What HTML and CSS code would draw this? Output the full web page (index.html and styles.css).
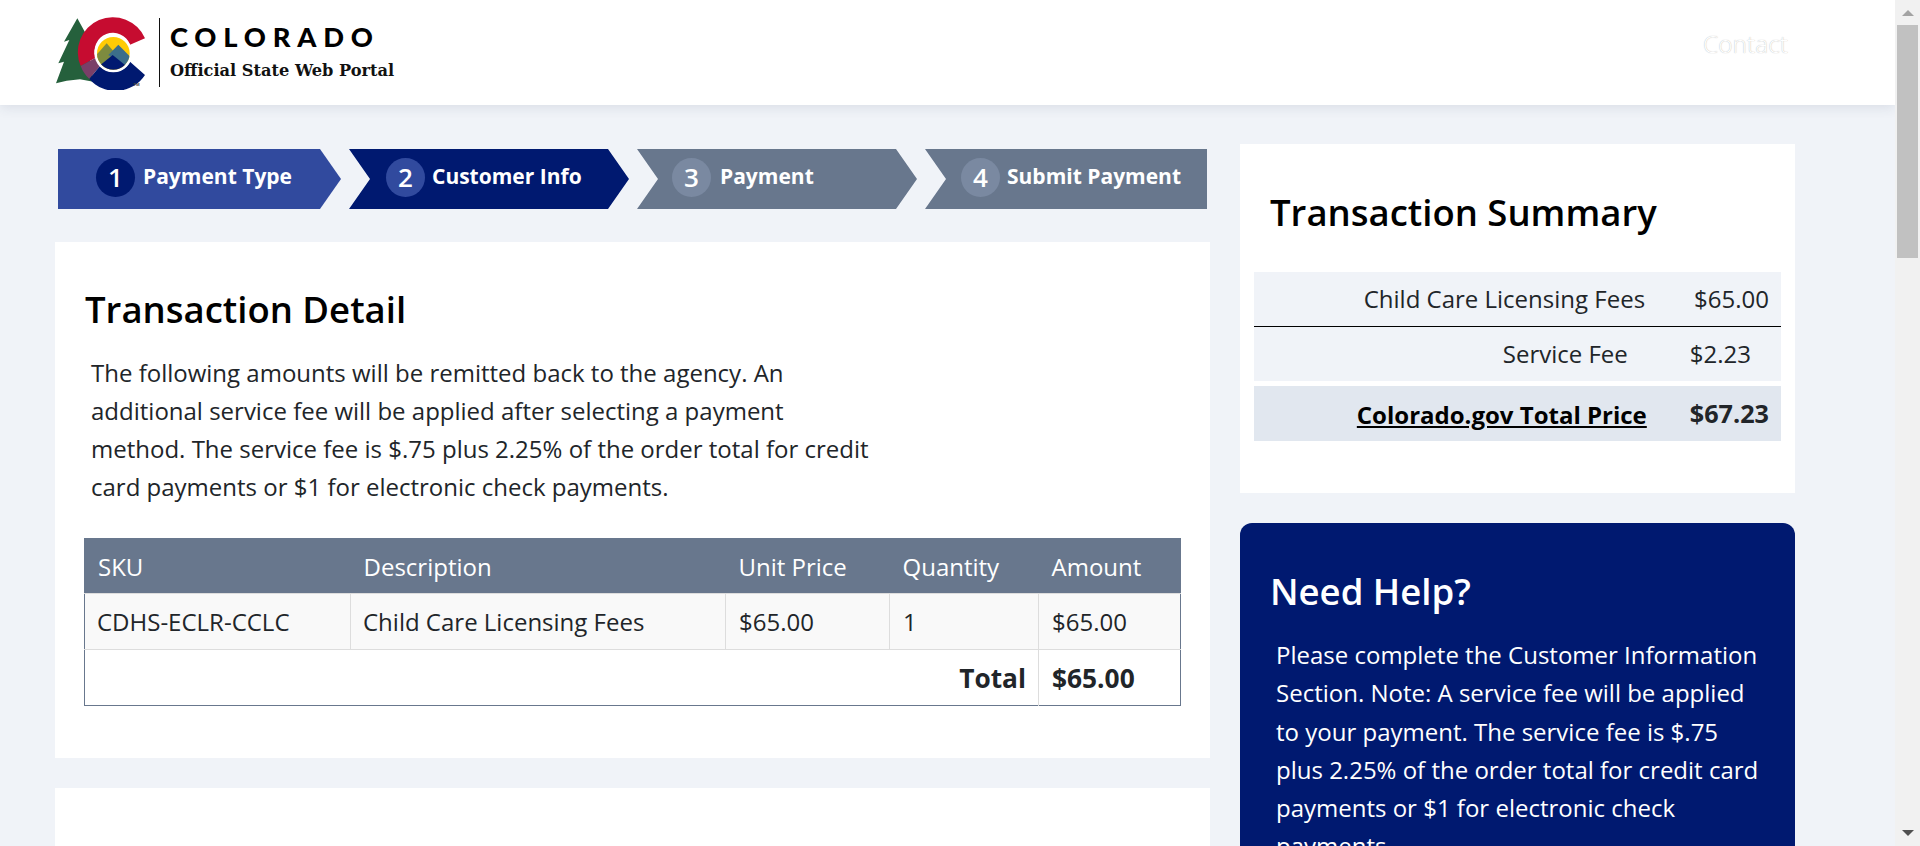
FILE: index.html
```html
<!DOCTYPE html>
<html>

<head>
    <meta charset="utf-8">
    <title>Colorado Official State Web Portal</title>
    <link rel="stylesheet" href="styles.css">
</head>

<body>
    <div class="viewport">
        <div class="page">
            <header class="site-header">
                <div class="logo">
                    <svg class="logo-mark" viewBox="0 0 360 240" width="120" height="80">
                        <polygon fill="#25603c" points="82,25 108,72 130,215 90,208 50,212 18,220 42,155 25,160 58,90 42,95" />
                        <path fill="#c60c30" d="M285 85A105 105 0 1 0 92 168L137 143A55 55 0 0 1 240 104Z" />
                        <path fill="#7a3f68" d="M92 168L137 143A55 55 0 0 0 150 168L118 207A105 105 0 0 1 92 168Z" />
                        <path fill="#001970" d="M118 207L150 168A55 55 0 0 0 240 155L285 195A105 105 0 0 1 118 207Z" />
                        <circle cx="190" cy="130" r="57" fill="#fff" />
                        <clipPath id="scene">
                            <circle cx="190" cy="130" r="49" />
                        </clipPath>
                        <g clip-path="url(#scene)">
                            <rect x="130" y="70" width="120" height="120" fill="#ffcb05" />
                            <polygon fill="#7d8b3f" points="130,145 170,100 200,135 170,180" />
                            <polygon fill="#3c6e8a" points="175,135 205,104 250,150 240,175" />
                            <polygon fill="#001970" points="130,182 188,135 250,185 250,190 130,190" />
                        </g>
                        <text class="logo-tm" x="250" y="227">TM</text>
                    </svg>
                    <div class="logo-text">
                        <div class="logo-state">COLORADO</div>
                        <div class="logo-sub">Official State Web Portal</div>
                    </div>
                </div>
                <a class="contact-link">Contact</a>
            </header>

            <main class="layout">
                <section class="col-main">
                    <div class="steps">
                        <div class="step step-1"><span class="step-num">1</span><span class="step-label">Payment Type</span></div>
                        <div class="step step-2"><span class="step-num">2</span><span class="step-label">Customer Info</span></div>
                        <div class="step step-3"><span class="step-num">3</span><span class="step-label">Payment</span></div>
                        <div class="step step-4"><span class="step-num">4</span><span class="step-label">Submit Payment</span></div>
                    </div>

                    <div class="card detail-card">
                        <h2>Transaction Detail</h2>
                        <p class="detail-note">The following amounts will be remitted back to the agency. An additional service fee will be applied after selecting a payment method. The service fee is $.75 plus 2.25% of the order total for credit card payments or $1 for electronic check payments.</p>
                        <table class="detail-table">
                            <colgroup>
                                <col class="col-sku">
                                <col class="col-desc">
                                <col class="col-price">
                                <col class="col-qty">
                                <col class="col-amount">
                            </colgroup>
                            <thead>
                                <tr>
                                    <th>SKU</th>
                                    <th>Description</th>
                                    <th>Unit Price</th>
                                    <th>Quantity</th>
                                    <th>Amount</th>
                                </tr>
                            </thead>
                            <tbody>
                                <tr class="item-row">
                                    <td>CDHS-ECLR-CCLC</td>
                                    <td>Child Care Licensing Fees</td>
                                    <td>$65.00</td>
                                    <td>1</td>
                                    <td>$65.00</td>
                                </tr>
                                <tr class="total-row">
                                    <td colspan="4">Total</td>
                                    <td>$65.00</td>
                                </tr>
                            </tbody>
                        </table>
                    </div>

                    <div class="card next-card">
                        <h2>Payer</h2>
                    </div>
                </section>

                <aside class="col-side">
                    <div class="card summary-card">
                        <h2>Transaction Summary</h2>
                        <div class="sum-row sum-fees">
                            <span>Child Care Licensing Fees</span>
                            <span>$65.00</span>
                        </div>
                        <div class="sum-row sum-service">
                            <span>Service Fee</span>
                            <span>$2.23</span>
                        </div>
                        <div class="sum-row sum-total">
                            <span class="sum-total-label">Colorado.gov Total Price</span>
                            <span class="sum-total-value">$67.23</span>
                        </div>
                    </div>

                    <div class="help-card">
                        <h2>Need Help?</h2>
                        <p>Please complete the Customer Information Section. Note: A service fee will be applied to your payment. The service fee is $.75 plus 2.25% of the order total for credit card payments or $1 for electronic check payments.</p>
                    </div>
                </aside>
            </main>
        </div>

        <div class="scrollbar">
            <span class="arrow-up"></span>
            <span class="thumb"></span>
            <span class="arrow-down"></span>
        </div>
    </div>
</body>

</html>
```

FILE: styles.css
```css
html,
body {
    margin: 0;
    height: 100%;
    overflow: hidden;
}

body {
    font-family: "Open Sans", "Liberation Sans", sans-serif;
    font-size: 24px;
    color: #212529;
    background: #f0f3f8;
}

.viewport {
    display: flex;
    height: 846px;
}

.page {
    flex: 1;
    min-width: 0;
    overflow: hidden;
}

/* header */
.site-header {
    height: 105px;
    background: #fff;
    box-shadow: 0 2px 12px rgba(40, 60, 90, 0.12);
    display: flex;
    align-items: flex-start;
    justify-content: space-between;
    padding: 0 107px 0 50px;
}

.logo {
    display: flex;
    padding-top: 10px;
}

.logo-mark {
    display: block;
    flex: none;
}

.logo-tm {
    font-family: "Liberation Sans", sans-serif;
    font-size: 13px;
    font-weight: 700;
    fill: #444;
}

.logo-text {
    border-left: 1px solid #111;
    margin: 8px 0 0 -11px;
    height: 69px;
    padding-left: 10px;
}

.logo-state {
    font-family: Lato, sans-serif;
    font-weight: 900;
    font-size: 27.3px;
    line-height: 30px;
    letter-spacing: 6.8px;
    color: #000;
    margin-top: 4px;
}

.logo-sub {
    font-family: "DejaVu Serif", serif;
    font-weight: 700;
    font-size: 16.2px;
    line-height: 20px;
    color: #111;
    margin-top: 9px;
}

.contact-link {
    margin-top: 27px;
    font-weight: 300;
    font-size: 24.5px;
    line-height: 34px;
    color: #fff;
    text-shadow: 0 0 1px #aaa;
}

/* two columns */
.layout {
    display: flex;
    align-items: flex-start;
    gap: 30px;
    padding: 39px 0 0 55px;
}

.col-main {
    width: 1155px;
    flex: none;
}

.col-side {
    width: 555px;
    flex: none;
}

.card {
    background: #fff;
}

h2 {
    margin: 0;
    font-size: 36.5px;
    font-weight: 600;
    line-height: 46px;
    color: #000;
}

/* steps */
.steps {
    display: flex;
    gap: 8px;
    margin: 5px 0 33px 3px;
}

.step {
    height: 60px;
    box-sizing: border-box;
    display: flex;
    align-items: center;
    gap: 8px;
    padding-bottom: 3px;
    color: #fff;
    font-size: 21px;
    font-weight: 700;
    clip-path: polygon(0 0, calc(100% - 21px) 0, 100% 50%, calc(100% - 21px) 100%, 0 100%, 21px 50%);
}

.step-label {
    margin-bottom: 3px;
}

.step-num {
    width: 39px;
    height: 39px;
    box-sizing: border-box;
    padding-bottom: 2px;
    border-radius: 50%;
    display: flex;
    align-items: center;
    justify-content: center;
    font-size: 26px;
    font-weight: 600;
}

.step-1 {
    width: 283px;
    padding-left: 38px;
    background: #314a9e;
    clip-path: polygon(0 0, calc(100% - 21px) 0, 100% 50%, calc(100% - 21px) 100%, 0 100%);
}

.step-1 .step-num {
    background: #001970;
}

.step-2 {
    width: 280px;
    gap: 7px;
    padding-left: 37px;
    background: #001970;
}

.step-2 .step-num {
    background: #314a9e;
}

.step-3 {
    width: 280px;
    gap: 9px;
    padding-left: 35px;
    background: #68778d;
}

.step-4 {
    width: 282px;
    gap: 7px;
    padding-left: 36px;
    background: #68778d;
    clip-path: polygon(0 0, 100% 0, 100% 100%, 0 100%, 21px 50%);
}

.step-3 .step-num,
.step-4 .step-num {
    background: #7a89a1;
}

/* transaction detail */
.detail-card {
    padding: 44px 29px 52px 30px;
    margin-bottom: 30px;
}

.detail-note {
    margin: 22px 0 32px 6px;
    width: 790px;
    line-height: 38px;
}

.detail-table {
    width: 1097px;
    margin-left: -1px;
    table-layout: fixed;
    border-collapse: collapse;
    border: 1px solid #68778d;
}

.col-sku {
    width: 266px;
}

.col-desc {
    width: 375px;
}

.col-price {
    width: 164px;
}

.col-qty {
    width: 149px;
}

.detail-table th,
.detail-table td {
    height: 56px;
    box-sizing: border-box;
    padding: 0 13px;
    font-weight: 400;
    text-align: left;
}

.detail-table th {
    height: 55px;
    background: #68778d;
    color: #fff;
}

.item-row td {
    background: #f9f9f9;
    border: 1px solid #ddd;
}

.detail-table .item-row td:nth-child(-n+2) {
    padding-left: 12px;
}

.item-row td:first-child {
    border-left: 0;
}

.item-row td:last-child {
    border-right: 0;
}

.detail-table .total-row td {
    border-left: 1px solid #ddd;
    font-size: 26.3px;
    font-weight: 700;
    color: #212529;
}

.detail-table .total-row td:first-child {
    border-left: 0;
    text-align: right;
    padding-right: 12px;
}

.next-card {
    height: 200px;
    padding: 49px 30px 0;
}

/* summary */
.summary-card {
    padding: 45px 14px 52px;
    margin-bottom: 30px;
}

.summary-card h2 {
    margin: 0 0 37px 16px;
}

.sum-row {
    display: flex;
    justify-content: flex-end;
    align-items: center;
    height: 54px;
    box-sizing: border-box;
    background: #f0f3f8;
}

.sum-fees {
    gap: 49px;
    height: 55px;
    padding: 0 12px 2px 0;
    border-bottom: 1px solid #000;
}

.sum-service {
    gap: 62px;
    padding: 0 30px 2px 0;
}

.sum-total {
    gap: 43px;
    height: 55px;
    margin-top: 5px;
    padding: 2px 12px 0 0;
    background: #e1e7ef;
    font-weight: 700;
}

.sum-total-label {
    color: #000;
    text-decoration: underline;
}

.sum-total-value {
    font-size: 25.2px;
    margin-top: -3px;
}

/* help */
.help-card {
    background: #001970;
    color: #fff;
    border-radius: 12px;
    padding: 45px 31px 40px;
}

.help-card h2 {
    color: #fff;
    margin-left: -1px;
}

.help-card p {
    margin: 22px 0 0 5px;
    line-height: 38.3px;
}

/* scrollbar */
.scrollbar {
    width: 25px;
    flex: none;
    background: #f1f1f1;
    display: flex;
    flex-direction: column;
    align-items: center;
}

.thumb {
    width: 21px;
    height: 233px;
    margin-top: 9px;
    background: #c1c1c1;
}

.arrow-up {
    margin-top: 10px;
    border-left: 6px solid transparent;
    border-right: 6px solid transparent;
    border-bottom: 6px solid #a3a3a3;
}

.arrow-down {
    margin-top: auto;
    margin-bottom: 10px;
    border-left: 6px solid transparent;
    border-right: 6px solid transparent;
    border-top: 6px solid #505050;
}
```
